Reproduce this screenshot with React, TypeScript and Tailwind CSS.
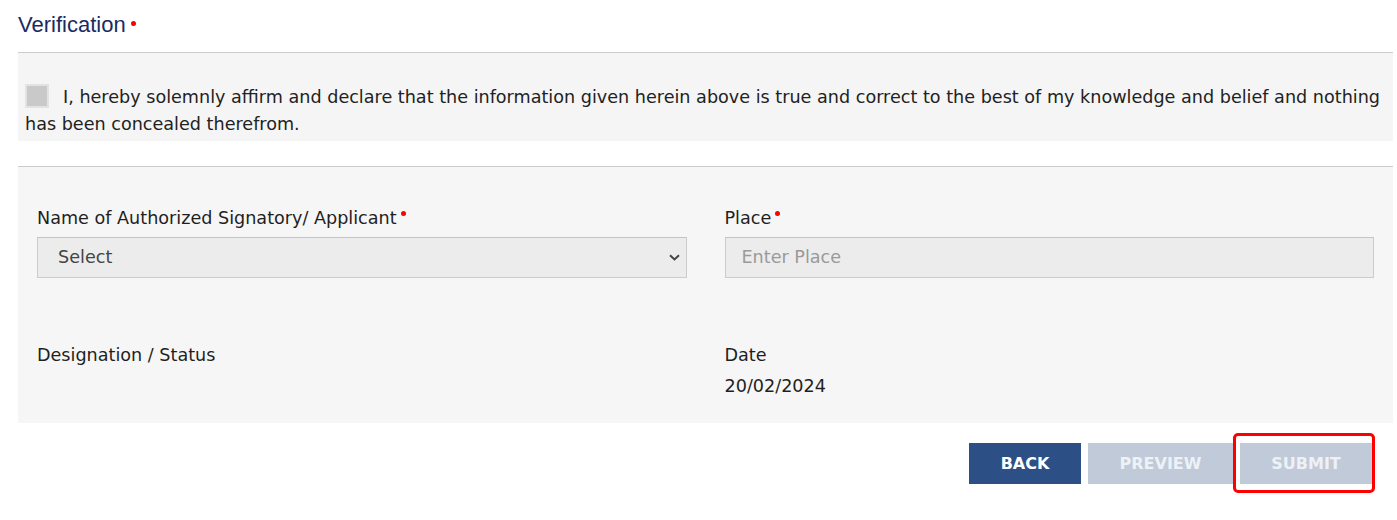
import React from "react";

const body = { fontFamily: '"DejaVu Sans", Verdana, sans-serif' };

const RequiredDot = ({ lift = "-translate-y-[6px]" }: { lift?: string }) => (
  <span className={`ml-[4px] inline-block h-[5px] w-[5px] rounded-full bg-[#ff0000] align-middle ${lift}`} />
);

export default function App() {
  return (
    <div className="min-h-[520px] w-[1397px] bg-white px-[18px] pr-[4px] text-[#222]" style={body}>
      <div className="flex h-[52px] items-start pt-[11px]">
        <h2
          className="text-[22px] leading-[28px] text-[#1b2b5f]"
          style={{ fontFamily: '"Liberation Sans", Arial, sans-serif' }}
        >
          Verification
          <span className="ml-[5px] inline-block h-[5px] w-[5px] -translate-y-[3px] rounded-full bg-[#ff0000] align-middle" />
        </h2>
      </div>

      <div className="border-t border-[#cccccc] bg-[#f5f5f5] pl-[7px] pr-[13px] pt-[31px] pb-[3px]">
        <p className="text-justify text-[17.6px] leading-[27px]">
          <span className="mr-[14px] inline-block h-[24px] w-[24px] -translate-y-[2px] border-2 border-[#e2e2e2] bg-[#c9c9c9] align-middle" />
          I, hereby solemnly affirm and declare that the information given herein above is true and correct to the best of my knowledge and belief and nothing has been concealed therefrom.
        </p>
      </div>

      <div className="mt-[25px] border-t border-[#cccccc] bg-[#f6f6f6] px-[19px] pt-[40px] pb-[26px]">
        <div className="grid grid-cols-2 gap-x-[38px]">
          <div>
            <label className="block text-[17.6px] leading-[22px] text-[#1f1f1f]">
              Name of Authorized Signatory/ Applicant
              <RequiredDot />
            </label>
            <div className="relative mt-[8px] flex h-[41px] items-center border border-[#cccccc] border-t-[#c4c4c4] bg-[#ececec] pl-[20px] text-[17.6px] text-[#444]">
              Select
              <svg
                className="absolute right-[6px] top-[16px]"
                width="11"
                height="7"
                viewBox="0 0 11 7"
                fill="none"
              >
                <path d="M1 1.2 L5.5 5.4 L10 1.2" stroke="#444" strokeWidth="2" />
              </svg>
            </div>
            <div className="mt-[66px] text-[17.6px] leading-[22px] text-[#1f1f1f]">
              Designation / Status
            </div>
          </div>
          <div>
            <label className="block text-[17.6px] leading-[22px] text-[#1f1f1f]">
              Place
              <RequiredDot />
            </label>
            <div className="mt-[8px] flex h-[41px] items-center border border-[#cccccc] border-t-[#c4c4c4] bg-[#ececec] pl-[16px] text-[17.6px] text-[#9a9a9a]">
              Enter Place
            </div>
            <div className="mt-[66px] text-[17.6px] leading-[22px] text-[#1f1f1f]">Date</div>
            <div className="mt-[9px] text-[17.6px] leading-[22px] text-[#1f1f1f]">20/02/2024</div>
          </div>
        </div>
      </div>

      <div className="flex justify-end gap-[7px] pr-[21px] pt-[20px]">
        <button className="h-[41px] w-[112px] bg-[#2c4f86] text-[16px] font-bold text-white">BACK</button>
        <button className="h-[41px] w-[145px] bg-[#c0cad9] text-[16px] font-bold text-[#eef1f6]">PREVIEW</button>
        <div className="relative">
          <button className="h-[41px] w-[132px] bg-[#c0cad9] text-[16px] font-bold text-[#eef1f6]">SUBMIT</button>
          <span className="pointer-events-none absolute -left-[7px] -right-[3px] -top-[10px] -bottom-[9px] rounded-[5px] border-[3px] border-[#ff0000]" />
        </div>
      </div>
    </div>
  );
}
